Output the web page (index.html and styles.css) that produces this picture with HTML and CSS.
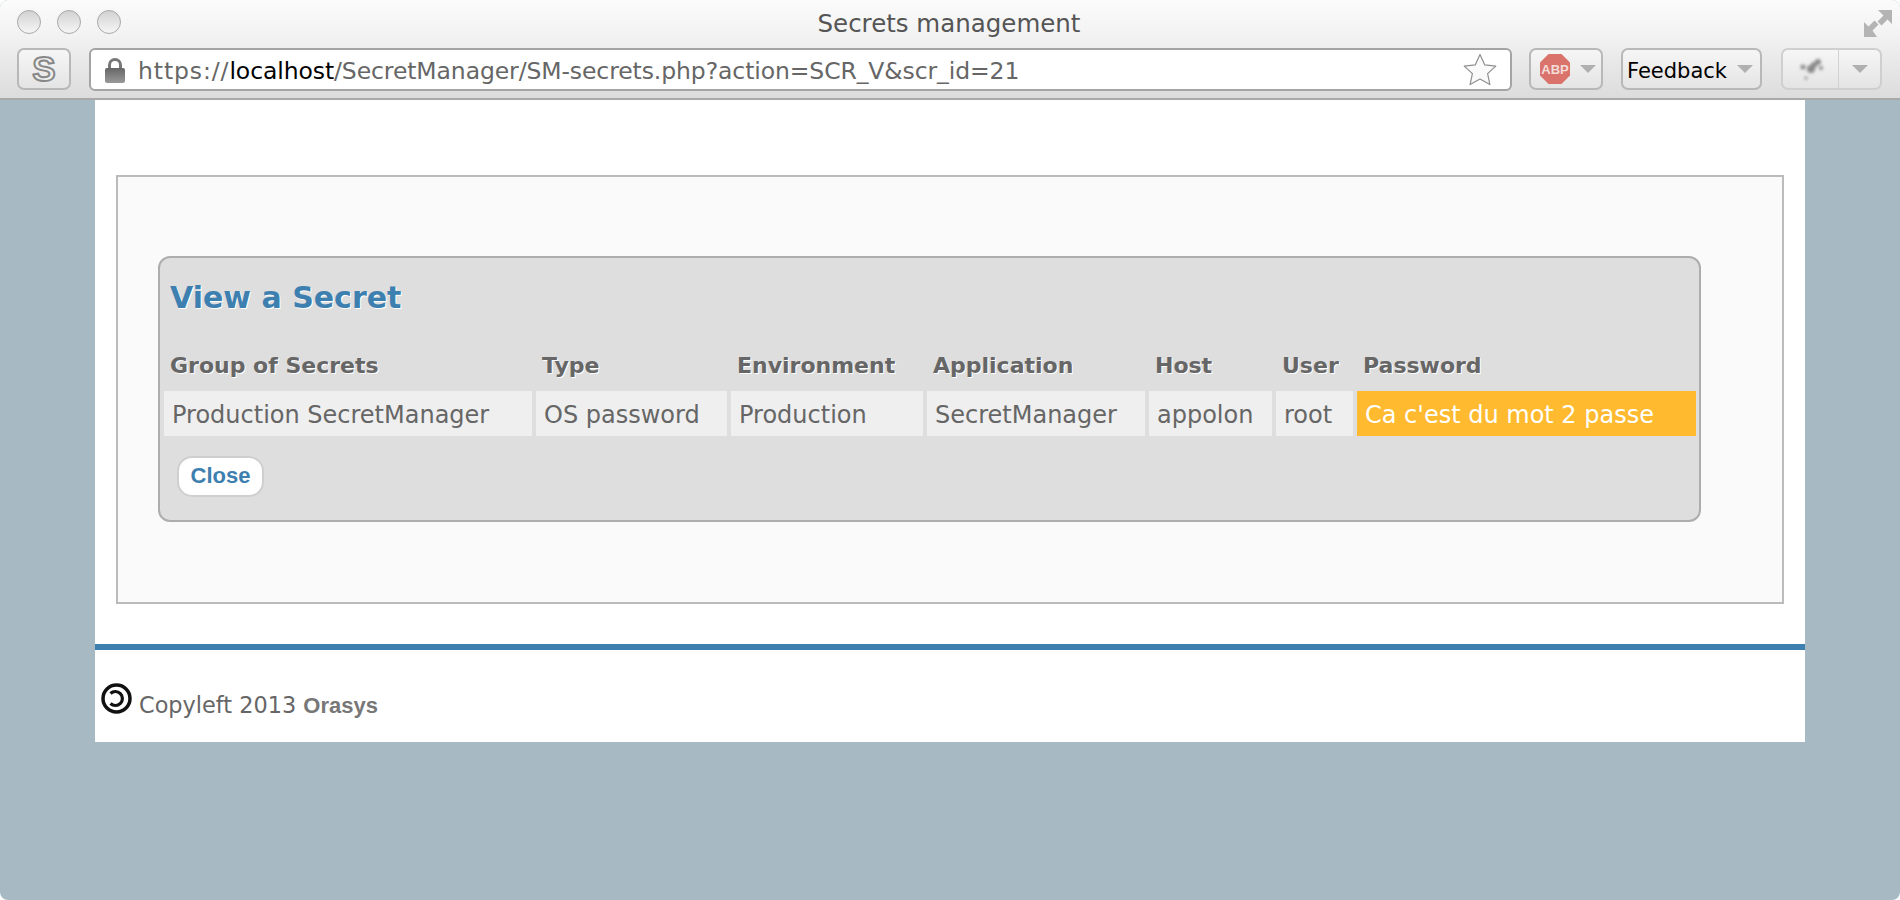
FILE: index.html
```html
<!DOCTYPE html>
<html lang="en">
<head>
  <meta charset="UTF-8" />
  <title>Secrets management</title>
  <link rel="stylesheet" href="styles.css">
</head>
<body>
  <div class="window">
    <header class="chrome">
      <div class="titlebar">
        <div class="lights">
          <span class="light"></span>
          <span class="light"></span>
          <span class="light"></span>
        </div>
        <div class="win-title">Secrets management</div>
        <svg class="fullscreen" width="28" height="28" viewBox="0 0 28 28">
          <path d="M14 1h14v14l-4.500-4.500-6 6-4-4 6-6zM0 13l4.500 4.500 6-6 4 4-6 6L13 28H0z" fill="#b4b4b4"/>
        </svg>
      </div>
      <div class="toolbar">
        <div class="tool-btn s-btn"><span class="s-glyph">S</span></div>
        <div class="urlbar">
          <svg class="lock" width="22" height="26" viewBox="0 0 22 26">
            <defs>
              <linearGradient id="lockfill" x1="0" y1="0" x2="0" y2="1">
                <stop offset="0" stop-color="#666"/>
                <stop offset="1" stop-color="#999"/>
              </linearGradient>
            </defs>
            <path d="M5.500 12V8a5.500 5.500 0 0 1 11 0v4" fill="none" stroke="#777" stroke-width="3"/>
            <rect x="1" y="11" width="20" height="15" rx="2" fill="url(#lockfill)"/>
          </svg>
          <span class="url"><span class="url-scheme">https://</span><span class="url-host">localhost</span>/SecretManager/SM-secrets.php?action=SCR_V&amp;scr_id=21</span>
          <svg class="star" width="34" height="33" viewBox="0 0 34 33">
            <path d="M17 1.500l4.800 10.400 11 1.200-8.200 7.500 2.300 11-9.900-5.600-9.900 5.600 2.300-11-8.200-7.500 11-1.200z" fill="#fafafa" stroke="#8f8f8f" stroke-width="1.200" stroke-linejoin="round"/>
          </svg>
        </div>
        <div class="tool-btn abp-btn">
          <svg class="abp" width="32" height="32" viewBox="0 0 32 32">
            <path d="M9.500 1h13L31 9.500v13L22.500 31h-13L1 22.500v-13z" fill="#d9736b"/>
            <text x="16" y="20.500" text-anchor="middle" class="abp-text">ABP</text>
          </svg>
          <span class="caret"></span>
        </div>
        <div class="tool-btn feedback-btn">
          <span class="feedback">Feedback</span>
          <span class="caret"></span>
        </div>
        <div class="tool-btn ext-btn">
          <div class="ext-icon">
            <svg width="34" height="30" viewBox="0 0 34 30">
              <g fill="#8a8a8a" class="blot">
                <circle cx="17" cy="15" r="4"/>
                <circle cx="24" cy="8" r="3"/>
                <circle cx="9" cy="13" r="2.500"/>
                <circle cx="20" cy="11" r="3"/>
                <circle cx="27" cy="14" r="2"/>
                <circle cx="12" cy="24" r="1.500"/>
              </g>
            </svg>
          </div>
          <div class="ext-menu"><span class="caret"></span></div>
        </div>
      </div>
    </header>

    <main class="page">
      <section class="panel">
        <div class="box">
          <h2 class="box-title">View a Secret</h2>
          <table class="secret-table">
            <colgroup>
              <col class="c-group">
              <col class="c-type">
              <col class="c-env">
              <col class="c-app">
              <col class="c-host">
              <col class="c-user">
              <col class="c-pass">
            </colgroup>
            <thead>
              <tr>
                <th>Group of Secrets</th>
                <th>Type</th>
                <th>Environment</th>
                <th>Application</th>
                <th>Host</th>
                <th>User</th>
                <th>Password</th>
              </tr>
            </thead>
            <tbody>
              <tr>
                <td>Production SecretManager</td>
                <td>OS password</td>
                <td>Production</td>
                <td>SecretManager</td>
                <td>appolon</td>
                <td>root</td>
                <td class="pass">Ca c'est du mot 2 passe</td>
              </tr>
            </tbody>
          </table>
          <a class="close-btn" href="#">Close</a>
        </div>
      </section>
      <footer class="foot">
        <svg class="copyleft" width="31" height="31" viewBox="0 0 31 31">
          <circle cx="15.500" cy="15.500" r="13.500" fill="none" stroke="#111" stroke-width="3.500"/>
          <path d="M9.500 10.500a7 7 0 1 1 0 10" fill="none" stroke="#111" stroke-width="3.200"/>
        </svg>
        <span class="foot-text">Copyleft 2013 <b>Orasys</b></span>
      </footer>
    </main>
  </div>
</body>
</html>
```

FILE: styles.css
```css
html, body {
  margin: 0;
  height: 100%;
  background: #fff;
}
body {
  font-family: 'DejaVu Sans', sans-serif;
  color: #666;
  overflow: hidden;
}
.window {
  height: 900px;
  background: #a7b9c3;
  border-radius: 8px;
  overflow: hidden;
}

/* browser chrome */
.chrome {
  height: 98px;
  background: linear-gradient(#fbfbfb, #f4f4f4 30%, #dcdcdc);
  border-bottom: 2px solid #a9a9a9;
}
.titlebar {
  position: relative;
  height: 47px;
  text-align: center;
}
.lights {
  position: absolute;
  left: 17px;
  top: 10px;
  display: flex;
  gap: 16px;
}
.light {
  width: 24px;
  height: 24px;
  box-sizing: border-box;
  border-radius: 50%;
  border: 1px solid #a8a8a8;
  background: linear-gradient(#d2d2d2, #f6f6f6);
}
.win-title {
  font-size: 24.500px;
  line-height: 47px;
  color: #555;
  padding-right: 2px;
}
.fullscreen {
  position: absolute;
  right: 8px;
  top: 9px;
}
.toolbar {
  display: flex;
  align-items: flex-start;
  padding: 1px 0 0 17px;
}
.tool-btn {
  height: 42px;
  box-sizing: border-box;
  border: 2px solid #b8b8b8;
  border-radius: 7px;
  background: linear-gradient(#f6f6f6, #e4e4e4);
  display: flex;
  align-items: center;
}
.s-btn {
  width: 54px;
  justify-content: center;
  margin-right: 18px;
}
.s-glyph {
  font: bold 35px 'Liberation Sans', sans-serif;
  color: #eee;
  -webkit-text-stroke: 2px #888;
}
.urlbar {
  width: 1423px;
  height: 43px;
  box-sizing: border-box;
  display: flex;
  align-items: center;
  padding: 0 13px 0 13px;
  background: #fff;
  border: 2px solid #a4a4a4;
  border-radius: 6px;
  margin-right: 17px;
}
.lock {
  margin-right: 12px;
}
.url {
  flex: 1;
  font-size: 23.500px;
  line-height: 35px;
  padding-top: 4px;
  color: #666;
  white-space: nowrap;
  letter-spacing: -0.100px;
}
.url-scheme {
  letter-spacing: 0.900px;
}
.url-host {
  color: #000;
}
.abp-btn {
  width: 74px;
  padding-left: 8px;
  gap: 9px;
  margin-right: 18px;
}
.abp-text {
  font: bold 13px 'Liberation Sans', sans-serif;
  fill: #f4dcd9;
}
.caret {
  width: 0;
  height: 0;
  border-left: 8px solid transparent;
  border-right: 8px solid transparent;
  border-top: 8px solid #b0b0b0;
}
.feedback-btn {
  width: 141px;
  padding-left: 4px;
  gap: 10px;
  margin-right: 19px;
}
.feedback {
  font-size: 21px;
  padding-top: 3px;
  color: #000;
}
.ext-btn {
  width: 101px;
  border-color: #cfcfcf;
}
.ext-icon {
  width: 55px;
  height: 100%;
  display: flex;
  align-items: center;
  justify-content: center;
  border-right: 1px solid #d2d2d2;
}
.blot {
  filter: blur(1.500px);
}
.ext-menu {
  flex: 1;
  display: flex;
  justify-content: center;
}

/* page */
.page {
  width: 1710px;
  height: 642px;
  margin: 0 auto;
  background: #fff;
  padding-top: 75px;
  box-sizing: border-box;
}
.panel {
  margin: 0 21px;
  height: 429px;
  box-sizing: border-box;
  padding: 79px 81px 0 40px;
  background: #fafafa;
  border: 2px solid #bbb;
}
.box {
  height: 266px;
  box-sizing: border-box;
  padding: 18px 0 0 0;
  background: #dedede;
  border: 2px solid #adadad;
  border-radius: 12px;
}
.box-title {
  margin: 0 0 30px 10px;
  font-size: 30px;
  line-height: 44px;
  font-weight: bold;
  color: #3d80b0;
  text-shadow: 1px 1px 0 #fff;
}
.secret-table {
  table-layout: fixed;
  width: 1538px;
  border-collapse: separate;
  border-spacing: 4px 0;
}
.c-group { width: 368px; }
.c-type { width: 191px; }
.c-env { width: 192px; }
.c-app { width: 218px; }
.c-host { width: 123px; }
.c-user { width: 77px; }
.c-pass { width: 339px; }
.secret-table th {
  padding: 0 0 9px 6px;
  text-align: left;
  font-size: 22px;
  line-height: 32px;
  color: #666;
  text-shadow: 1px 1px 0 #fff;
  white-space: nowrap;
}
.secret-table td {
  height: 45px;
  padding: 2px 0 0 8px;
  box-sizing: border-box;
  background: #efefef;
  font-size: 24px;
  color: #666;
  white-space: nowrap;
}
.secret-table td.pass {
  background: #ffba2f;
  color: #fff;
}
.close-btn {
  display: inline-block;
  margin: 20px 0 0 17px;
  width: 87px;
  height: 41px;
  box-sizing: border-box;
  border: 2px solid #cfcfcf;
  border-radius: 15px;
  background: #fff;
  font: bold 22px/36px 'Liberation Sans', sans-serif;
  color: #3d80b0;
  text-align: center;
  text-decoration: none;
}

/* footer */
.foot {
  margin-top: 40px;
  border-top: 6px solid #3d80b0;
  padding: 33px 0 0 6px;
  display: flex;
  align-items: flex-start;
}
.foot-text {
  margin: 9px 0 0 7px;
  font-size: 22.400px;
  color: #666;
}
.foot-text b {
  font: bold 22px 'Liberation Sans', sans-serif;
  color: #777;
}
```
